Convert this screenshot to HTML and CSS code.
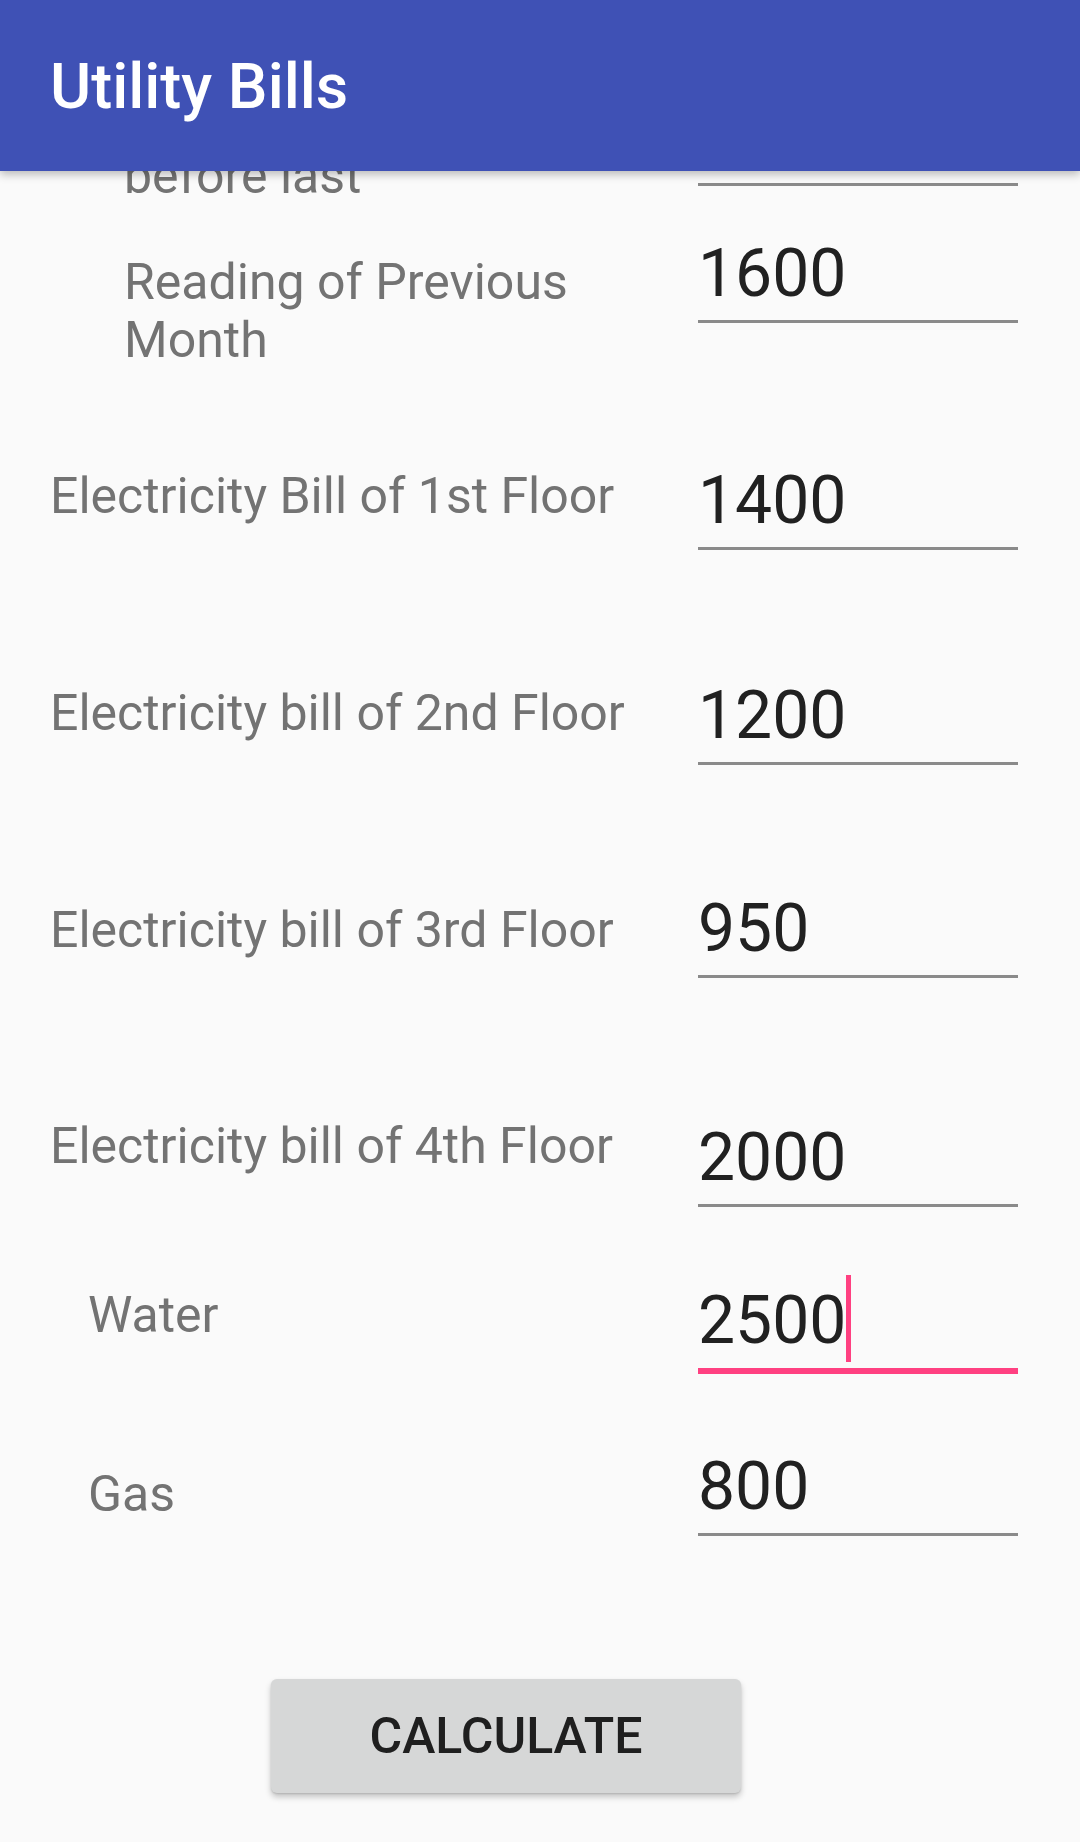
FILE: index.html
```html
<!DOCTYPE html>
<html lang="en">
<head>
<meta charset="utf-8">
<title>Utility Bills</title>
<link rel="stylesheet" href="styles.css">
</head>
<body>
<header class="appbar">
  <h1 class="appbar-title">Utility Bills</h1>
</header>

<main class="content">
  <div class="row row-0">
    <div class="label label-indent-lg label-off-0">before last</div>
    <div class="field"><span class="value"></span></div>
  </div>

  <div class="row row-1">
    <div class="label label-indent-lg label-off-1">Reading of Previous Month</div>
    <div class="field"><span class="value">1600</span></div>
  </div>

  <div class="row row-2">
    <div class="label label-off-2">Electricity Bill of 1st Floor</div>
    <div class="field"><span class="value">1400</span></div>
  </div>

  <div class="row row-3">
    <div class="label label-off-3">Electricity bill of 2nd Floor</div>
    <div class="field"><span class="value">1200</span></div>
  </div>

  <div class="row row-4">
    <div class="label label-off-4">Electricity bill of 3rd Floor</div>
    <div class="field"><span class="value">950</span></div>
  </div>

  <div class="row row-5">
    <div class="label label-off-5">Electricity bill of 4th Floor</div>
    <div class="field"><span class="value">2000</span></div>
  </div>

  <div class="row row-6">
    <div class="label label-indent-md label-off-6">Water</div>
    <div class="field field-focused"><span class="value value-caret">2500</span></div>
  </div>

  <div class="row row-7">
    <div class="label label-indent-md label-off-7">Gas</div>
    <div class="field"><span class="value">800</span></div>
  </div>

  <div class="actions">
    <button class="btn" type="button">Calculate</button>
  </div>
</main>
</body>
</html>
```

FILE: styles.css
```css
html, body {
  margin: 0;
  padding: 0;
}

body {
  background: #fafafa;
  font-family: Roboto, "Noto Sans", "Liberation Sans", sans-serif;
  width: 1080px;
  height: 1842px;
  overflow: hidden;
}

/* ---------- App bar (overlays the scrolled content) ---------- */
.appbar {
  position: fixed;
  top: 0;
  left: 0;
  right: 0;
  z-index: 10;
  height: 171px;
  background: #3f51b5;
  display: flex;
  align-items: center;
  padding: 2px 50px 0;
  box-sizing: border-box;
  box-shadow: 0 3px 9px rgba(0, 0, 0, 0.28);
}

.appbar-title {
  margin: 0;
  color: #ffffff;
  font-family: Roboto, "Noto Sans", sans-serif;
  font-weight: 500;
  font-size: 63px;
}

/* ---------- Form rows ---------- */
.content {
  padding-top: 98px;
}

.row {
  display: flex;
  align-items: flex-start;
  padding-right: 62px;
  box-sizing: border-box;
}

.row-0 { height: 137px; }
.row-1 { height: 227px; }
.row-2 { height: 215px; }
.row-3 { height: 213px; }
.row-4 { height: 229px; }
.row-5 { height: 163px; }
.row-6 { height: 166px; }
.row-7 { height: 231px; }

.label {
  flex: 1;
  padding: 0 40px 0 50px;
  font-size: 50px;
  line-height: 58px;
  color: #737373;
}

.label-indent-lg { padding-left: 124px; }
.label-indent-md { padding-left: 88px; }

.label-off-0 { margin-top: 49px; }
.label-off-1 { margin-top: 18px; }
.label-off-2 { margin-top: 5px; }
.label-off-3 { margin-top: 7px; }
.label-off-4 { margin-top: 11px; }
.label-off-5 { margin-top: -2px; }
.label-off-6 { margin-top: 4px; }
.label-off-7 { margin-top: 17px; }

.field {
  flex: 0 0 320px;
  width: 320px;
  height: 77px;
  padding-bottom: 8px;
  border-bottom: 3px solid #8a8a8a;
  font-size: 66px;
  line-height: 77px;
  color: #212121;
}

.field-focused {
  padding-bottom: 9px;
  border-bottom: 6px solid #ff4081;
}

.value-caret {
  border-right: 5px solid #ff4081;
  padding: 7px 0 3px;
}

/* ---------- Button ---------- */
.actions {
  display: flex;
  padding-left: 271px;
}

.btn {
  width: 470px;
  height: 114px;
  border: 0;
  border-radius: 6px;
  background: #d6d7d7;
  color: #1f1f1f;
  font-family: Roboto, "Noto Sans", sans-serif;
  font-weight: 500;
  font-size: 50px;
  text-transform: uppercase;
  padding: 0;
  box-shadow: 0 4px 6px rgba(0, 0, 0, 0.22), 0 1px 2px rgba(0, 0, 0, 0.12);
}
```
